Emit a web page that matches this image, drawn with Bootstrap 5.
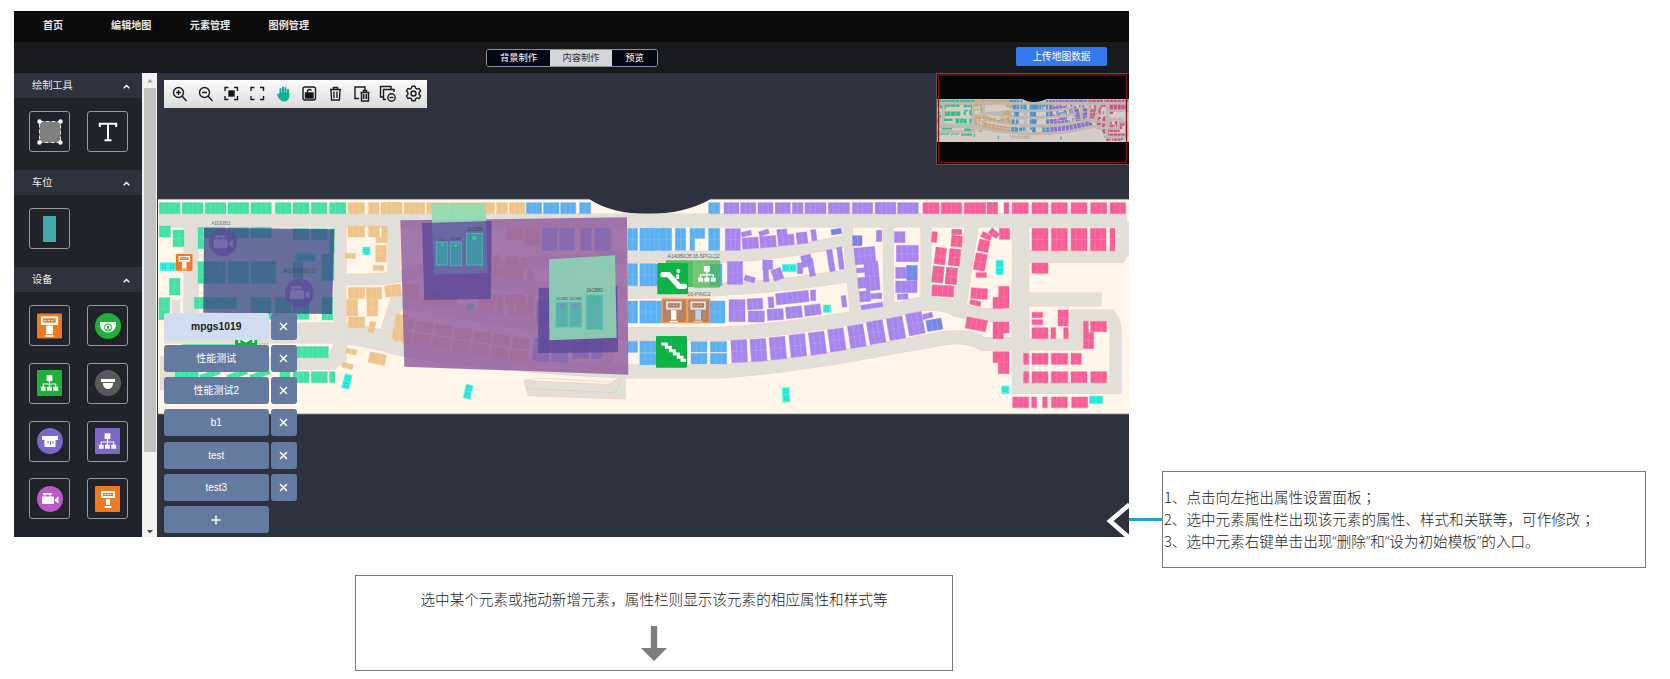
<!DOCTYPE html>
<html lang="zh-CN">
<head>
<meta charset="utf-8">
<title>地图编辑</title>
<link href="https://cdn.jsdelivr.net/npm/bootstrap@5.3.0/dist/css/bootstrap.min.css" rel="stylesheet">
<style>
body{width:1670px;height:679px;overflow:hidden;background:#fff;font-family:"Liberation Sans","Noto Sans CJK SC",sans-serif;color:#333}
.stage{height:526px;margin:11px 0 0 14px}
.editor{width:1115px;height:526px;background:#2d323e;font-size:10px;overflow:hidden}
.topnav{height:31px;background:#0b0b0b;padding-left:29px;gap:38.4px;font-weight:700;color:#e8e8e8;padding-bottom:2px}
.topnav a{color:inherit;text-decoration:none;font-size:10.1px;line-height:14px}
.topnav a:first-child{margin-right:9.500px}
.subbar{height:31px;background:#1a1b1f;position:relative}
.tabs{width:172px;height:18px;margin-left:472px;border:1px solid #8d9096;border-radius:3px;overflow:hidden;font-size:9.3px}
.tabs span{background:#020814;color:#fff;line-height:16px;text-align:center}
.tabs .on{background:#d5d6dc;color:#333}
.upload{width:91px;height:18.5px;background:#347aef;color:#fff;font-size:9.7px;line-height:17px;padding:0;border:0;border-radius:2px;margin:0 22px 2px 0}
.side{width:128px;background:#20232a}
.side h6{height:25px;margin:0;padding:1px 12px 0 18px;background:#2d323e;font-size:10.2px;font-weight:400;color:#e9e9e9}
.tools{display:grid;grid-template-columns:41px 41px;column-gap:17px;row-gap:16.8px;padding:13px 0 0 15px;height:72px}
.tools.dev{height:auto}
.tool{height:41px;border:1px solid #989898;border-radius:3px}
.sbar{width:15px;background:#f1f1f1;padding:0 1px 0 2px}
.thumb{height:364px;background:#c1c1c1}
.arr{height:15px}
.canvas{width:972px}
.mapsvg,.mapsvg svg{display:block}
.toolbar{left:7px;top:7px;width:263px;height:28px;background:linear-gradient(#fafafa,#dcdcdc);padding:0 1px 1px 2px}
.floors{left:7px;top:239.500px;row-gap:5.3px}
.floors .line{gap:2px;height:27px}
.fl{width:104.5px;height:27px;border-radius:3px;background:#647a9f;color:#fff;text-align:center;line-height:28px;font-size:10px}
.fl.sel{background:#d0ddf1;color:#1c1c1c;font-weight:700;font-size:10.3px}
.xx{width:26px;height:27px;border-radius:3px;background:#647a9f}
.mini{right:0;top:0;width:193px;height:92px;background:#050709;border:1px solid #55565a;border-right:0}
.pull{right:0;bottom:0}
.link{width:33px;height:2.5px;background:#22a1d6;margin-top:507px}
.note{border:1px solid #797979;font-family:"Noto Sans CJK SC Light","Noto Sans CJK SC",sans-serif;font-weight:300;font-size:14.6px;line-height:22px;color:#222}
.n1{width:484px;height:97px;margin-top:460px;padding:0 0 2px 1px}
.n2{width:598px;height:96px;margin:38px 0 0 355px;padding-top:12px;font-size:14.6px}
.q{font-family:"Open Sans",sans-serif;font-weight:300}
.sc{font-family:"Noto Sans CJK TC Light","Noto Sans CJK TC",sans-serif}
</style>
</head>
<body>
<svg width="0" height="0" class="position-absolute">
<defs>
<symbol id="kiosk" viewBox="0 0 26 26"><rect width="26" height="26" rx="1" fill="#f0781e"/><path d="M4 3h18v9H4z" fill="#fff"/><rect x="6.500" y="5" width="13" height="4.500" fill="#f0781e"/><path d="M8 7.200h10" stroke="#fff" stroke-dasharray="2 1.500"/><path d="M9.500 12.500h7v9h-7zM8.500 22.500h9v1.800h-9z" fill="#fff"/></symbol>
<symbol id="tree" viewBox="0 0 26 26"><path d="M10 5h6v6h-6zM4 17h5v4H4zM10.500 17h5v4h-5zM17 17h5v4h-5z" fill="#fff"/><path d="M13 10v8M6.500 18v-4h13v4" stroke="#fff" fill="none" stroke-width="1.200"/></symbol>
<symbol id="cam" viewBox="0 0 26 26"><path d="M5 10.500h12v7.500H5zM18 13l3.500-2.500v7L18 15zM6 7h9v1.800H6z" fill="#fff"/><path d="M8 8v3M13 8v3" stroke="#fff"/></symbol>
</defs></svg>

<div class="stage d-flex align-items-start">
 <div class="editor d-flex flex-column flex-shrink-0">
  <nav class="topnav d-flex align-items-center"><a>首页</a><a>编辑地图</a><a>元素管理</a><a>图例管理</a></nav>
  <div class="subbar d-flex align-items-center justify-content-between">
   <div class="tabs d-flex"><span style="width:63px">背景制作</span><span class="on" style="width:62px">内容制作</span><span class="flex-fill">预览</span></div>
   <button class="btn upload">上传地图数据</button>
  </div>
  <div class="d-flex flex-fill" style="min-height:0">
   <aside class="side overflow-hidden">
    <h6 class="d-flex align-items-center justify-content-between">绘制工具<svg width="7" height="5" viewBox="0 0 7 5"><path d="M.7 4.200L3.500 1.400l2.800 2.800" fill="none" stroke="#fff" stroke-width="1.400"/></svg></h6>
    <div class="tools">
     <div class="tool d-flex align-items-center justify-content-center"><svg width="26" height="26"><rect x="2.500" y="2.500" width="21" height="21" fill="#808080" stroke="#ddd" stroke-dasharray="4 2"/><g fill="#fff"><circle cx="2.500" cy="2.500" r="2.200"/><circle cx="23.500" cy="2.500" r="2.200"/><circle cx="2.500" cy="23.500" r="2.200"/><circle cx="23.500" cy="23.500" r="2.200"/></g></svg></div>
     <div class="tool d-flex align-items-center justify-content-center"><svg width="20" height="20"><path d="M1.800 5V1.800h16.400V5M10 2v16M6.500 18.200h7" fill="none" stroke="#fff" stroke-width="2"/></svg></div>
    </div>
    <h6 class="d-flex align-items-center justify-content-between">车位<svg width="7" height="5" viewBox="0 0 7 5"><path d="M.7 4.200L3.500 1.400l2.800 2.800" fill="none" stroke="#fff" stroke-width="1.400"/></svg></h6>
    <div class="tools"><div class="tool d-flex align-items-center justify-content-center"><svg width="13" height="26"><rect width="13" height="26" fill="#40a9a9"/></svg></div></div>
    <h6 class="d-flex align-items-center justify-content-between">设备<svg width="7" height="5" viewBox="0 0 7 5"><path d="M.7 4.200L3.500 1.400l2.800 2.800" fill="none" stroke="#fff" stroke-width="1.400"/></svg></h6>
    <div class="tools dev">
     <div class="tool d-flex align-items-center justify-content-center"><svg width="25" height="26"><use href="#kiosk"/></svg></div>
     <div class="tool d-flex align-items-center justify-content-center"><svg width="26" height="26"><circle cx="13" cy="13" r="13" fill="#1db13a"/><path d="M5 9h16v3c0 4-4 7.500-8 7.500S5 16 5 12z" fill="#fff"/><circle cx="13" cy="14.500" r="3.600" fill="none" stroke="#1db13a"/><circle cx="13" cy="13.700" r="1.200" fill="#1db13a"/><path d="M11 16.800q2-2.500 4 0" stroke="#1db13a" fill="none"/></svg></div>
     <div class="tool d-flex align-items-center justify-content-center"><svg width="25" height="26"><rect width="25" height="26" rx="1" fill="#1db13a"/><use href="#tree"/></svg></div>
     <div class="tool d-flex align-items-center justify-content-center"><svg width="26" height="26"><circle cx="13" cy="13" r="13" fill="#595959"/><path d="M6 9h14v3H6zM8 13h10c0 8-10 8-10 0z" fill="#fff"/></svg></div>
     <div class="tool d-flex align-items-center justify-content-center"><svg width="26" height="26"><circle cx="13" cy="13" r="13" fill="#7b68c8"/><path d="M5 8h16v4H5zM7.500 12h11v7h-11z" fill="#fff"/><path d="M11 13v2.500M13.500 13v4M16 13v2.500" stroke="#7b68c8"/></svg></div>
     <div class="tool d-flex align-items-center justify-content-center"><svg width="25" height="26"><rect width="25" height="26" rx="1" fill="#7b68c8"/><use href="#tree"/></svg></div>
     <div class="tool d-flex align-items-center justify-content-center"><svg width="26" height="26"><circle cx="13" cy="13" r="13" fill="#bb59c6"/><use href="#cam"/></svg></div>
     <div class="tool d-flex align-items-center justify-content-center"><svg width="25" height="26"><rect width="25" height="26" rx="1" fill="#f0781e"/><path d="M6 5h14v7H6zM11 13h4v6h-4zM9.500 20h7v2h-7z" fill="#fff"/><path d="M8 8.500h10" stroke="#f0781e" stroke-width="3"/><path d="M9.500 8.500h7" stroke="#fff" stroke-dasharray="1.500 1"/></svg></div>
    </div>
   </aside>
   <div class="sbar d-flex flex-column"><svg class="arr" width="12"><path d="M3 9.500l3-3.500 3 3.500z" fill="#a3a3a3"/></svg><div class="thumb"></div><svg class="arr mt-auto" width="12"><path d="M3 8l3 3.500 3-3.500z" fill="#505050"/></svg></div>
   <div class="canvas position-relative">
    <svg class="mapsvg" width="972" height="464" viewBox="157 73 972 464">
     <g id="plan">
      <path d="M158 199H589Q612 214 648 214T711 199H1129V414H158z" fill="#fff6e9"/>
      <g id="roads"></g>
      <g id="blocks"></g>
     </g>
     <path d="M158 199.300H589M711 199.300H1129M158 414H1129" stroke="#8e8984" fill="none" stroke-width=".8"/>
     <!-- coloured zones and placed devices, west -->
     <g transform="translate(150 190) scale(.33333)">
      <path d="M162 113L553 118 546 372 160 368z" fill="#404c87" fill-opacity=".8"/>
      <g fill="#5c4b98" fill-opacity=".75"><circle cx="219" cy="157" r="42"/><circle cx="448" cy="309" r="43"/></g>
      <g opacity=".16"><use href="#cam" x="174" y="112" width="90" height="90"/><use href="#cam" x="402" y="264" width="92" height="92"/></g>
      <use href="#kiosk" x="78" y="191" width="50" height="52"/>
      <path d="M255 447h67v25h-67z" fill="#0eb345"/><path d="M268 447v12M310 447v12M275 447l13 8 12-8" stroke="#fff" stroke-width="6" fill="none"/>
      <g font-size="16" fill="#555" opacity=".7"><text x="184" y="106" textLength="58">A1010801</text><text x="400" y="249" font-size="20" textLength="96" fill="#3c3d70">A1010802</text><text x="325" y="470" font-size="14">A101</text></g>
     </g>
     <!-- centre -->
     <g transform="translate(390 190) scale(.33333)">
      <path d="M31 91L711 82 715 554 43 530z" fill="#905a9e" fill-opacity=".82"/>
      <path d="M96 99L305 93 303 327 103 330z" fill="#5a4699" fill-opacity=".78"/>
      <path d="M123 39H288V94L126 98z" fill="#90dbaf" fill-opacity=".9"/>
      <path d="M126 98L288 94 293 248 132 254z" fill="#6a8fb0" fill-opacity=".4"/>
      <path d="M446 294L682 288 684 487 444 489z" fill="#5a4699" fill-opacity=".78"/>
      <path d="M477 208L675 196 680 443 478 451z" fill="#8dcdb4" fill-opacity=".95"/>
      <g fill="#4491aa" stroke="#4cb4b9" stroke-width="3"><rect x="139" y="156" width="34" height="69"/><rect x="181" y="156" width="33" height="71"/><rect x="230" y="130" width="47" height="95"/></g>
      <g fill="#5aafa9" stroke="#4fc3b4" stroke-width="3"><rect x="498" y="337" width="36" height="74"/><rect x="539" y="337" width="35" height="74"/><rect x="589" y="315" width="48" height="103"/></g>
      <g fill="#40c080"><circle cx="157" cy="163" r="5"/><circle cx="197" cy="166" r="5"/><circle cx="253" cy="144" r="7"/><circle cx="613" cy="329" r="7"/></g><g fill="#8a83cb"><circle cx="516" cy="346" r="6"/><circle cx="557" cy="346" r="6"/></g>
      <g fill="#444" font-size="13" opacity=".75"><text x="145" y="153" font-size="10">16-C</text><text x="180" y="151" textLength="36">16-CB85</text><text x="231" y="123" font-size="16" textLength="48">16-CB86</text><text x="498" y="330" textLength="37">16-CB82</text><text x="539" y="330" textLength="37">16-CB84</text><text x="588" y="307" font-size="16" textLength="50">16-CB83</text></g>
     </g>
     <g transform="translate(630 190) scale(.33333)">
      <rect x="108" y="211" width="82" height="80" fill="#55bd6a"/><rect x="190" y="211" width="81" height="82" rx="4" fill="#45b94e" fill-opacity=".75"/><use href="#tree" x="192" y="213" width="77" height="77"/>
      <rect x="82" y="219" width="92" height="94" rx="3" fill="#0eb345"/><path d="M99 254h17l31 35h16" fill="none" stroke="#fff" stroke-width="16" stroke-linecap="round" stroke-linejoin="round"/><path d="M143 253v14" stroke="#fff" stroke-width="9"/><circle cx="145" cy="243" r="6" fill="#fff"/>
      <g fill="#b78362" stroke="#f59b55" stroke-width="4"><rect x="97" y="327" width="73" height="71"/><rect x="173" y="327" width="66" height="71"/></g>
      <g fill="#ddd"><path d="M108 334h47v25h-47zM181 334h47v25h-47z"/><path d="M123 361h16v28h-16zM119 392h25v5h-25z" fill="#fff"/><path d="M196 361h17v28h-17zM192 392h25v5h-25z" fill="#b9d5ee"/></g><path d="M114 346h35M187 346h35" stroke="#a67b60" stroke-width="13"/><path d="M118 346h28M190 346h28" stroke="#eee" stroke-width="2" stroke-dasharray="6 4"/>
      <rect x="78" y="438" width="93" height="95" rx="3" fill="#0eb345"/><path d="M94 462h15v10h12v10h12v10h12v10h11v9h12" fill="none" stroke="#fff" stroke-width="9"/>
      <g fill="#555" font-size="17" opacity=".8"><text x="112" y="203" textLength="158">A14089CB 16-SPGLQ2</text><text x="172" y="317" textLength="70">16-PING2</text></g>
     </g>
    </svg>
    <div id="bar" class="toolbar position-absolute d-flex align-items-center"></div>
    <div id="floors" class="floors position-absolute d-flex flex-column"></div>
    <div class="mini position-absolute"><svg class="mapsvg" width="192" height="90"><svg x="0" y="25" width="192" height="43" viewBox="158 199 971 215" preserveAspectRatio="none"><use href="#plan" opacity=".83"/></svg><rect x="1.500" y="1" width="188" height="87.500" fill="none" stroke="#8a0d14" stroke-width="1.300"/></svg></div>
    <svg class="pull position-absolute" width="23" height="36"><path d="M23.500 3.500L4 20l19.500 17" fill="none" stroke="#fff" stroke-width="4.600"/></svg>
   </div>
  </div>
 </div>
 <div class="link flex-shrink-0"></div>
 <div class="note n1 flex-shrink-0 d-flex flex-column justify-content-center text-nowrap"><div>1、点击向左拖出属性设置面板<span class="sc" lang="zh-TW">；</span></div><div>2、选中元素属性栏出现该元素的属性、样式和关联等，可作修改<span class="sc" lang="zh-TW">；</span></div><div>3、选中元素右键单击出现<span class="q">“</span>删除<span class="q">”</span>和<span class="q">“</span>设为初始模板<span class="q">”</span>的入口。</div></div>
</div>
<div class="note n2 text-center d-flex flex-column align-items-center"><div>选中某个元素或拖动新增元素，属性栏则显示该元素的相应属性和样式等</div><svg class="mt-3" width="26" height="35"><path d="M9.800 0h6.400v22H26L13 35 0 22h9.800z" fill="#7d7d7d"/></svg></div>

<script src="https://cdn.jsdelivr.net/npm/bootstrap@5.3.0/dist/js/bootstrap.bundle.min.js"></script>
<script>
// toolbar
const I=[
'<circle cx="7.500" cy="7.500" r="5"/><path d="M11 11l4.500 5M5 7.500h5M7.500 5v5"/>',
'<circle cx="7.500" cy="7.500" r="5"/><path d="M11 11l4.500 5M5 7.500h5"/>',
'<path d="M2 6V2.500h3.500M11 2.500h3.500V6M14.500 11v3.500H11M5.500 14.500H2V11"/><rect x="6" y="6" width="5" height="5" fill="#111"/>',
'<path d="M2 6V2.500h3.500M11 2.500h3.500V6M14.500 11v3.500H11M5.500 14.500H2V11"/>',
'<path d="M5.500 10V4M8 9V2.500M10.500 9V3M13 10V5" stroke="#0bb39c" stroke-width="2" stroke-linecap="round"/><path d="M4.600 8h9.400v4q-1 4-4 4H8q-2 0-4-3L2.200 9.500l1.500-.5 1.500 1.800z" fill="#0bb39c" stroke="#0bb39c" stroke-width=".8"/>',
'<rect x="2" y="2" width="12.500" height="13" rx="2"/><rect x="4.500" y="8" width="7.500" height="5" fill="#111"/><path d="M6.500 8V5.500q2-2 4 0"/>',
'<path d="M3 4.500h11M6.500 4V2.500h4V4M4 5l.6 10h7.800L13 5M7 6.500v6.500M10 6.500v6.500"/>',
'<path d="M6 13.500H2V2h10v3"/><path d="M7.500 7.500h9M10.500 7V5.500h3V7M8.500 8v8h7V8M10.700 9v5M13.300 9v5" stroke-width="1.500"/>',
'<path d="M4 12H1.500V1.500H12V4"/><path d="M7 14.500H4.500V4.500H15V7"/><circle cx="12.500" cy="12.500" r="3.700"/><path d="M10.500 12.500h4"/>',
'<path d="M7 1.200h3l.5 2 1.600.9 2-.6 1.500 2.600-1.500 1.500v1.800l1.500 1.500-1.500 2.600-2-.6-1.600.9-.5 2H7l-.5-2-1.600-.9-2 .6-1.500-2.600 1.500-1.500V7.600L1.400 6.100l1.500-2.600 2 .6 1.600-.9z" stroke-linejoin="round"/><circle cx="8.500" cy="8.500" r="2.500"/>'];
document.getElementById('bar').innerHTML=I.map(p=>`<div class="flex-fill d-flex justify-content-center"><svg width="17" height="17" fill="none" stroke="#1c1c1c" stroke-width="1.400">${p}</svg></div>`).join('');
// floor list
const X='<div class="xx d-flex align-items-center justify-content-center"><svg width="9" height="9"><path d="M1 1l7 7M8 1L1 8" stroke="#fff" stroke-width="1.500"/></svg></div>';
document.getElementById('floors').innerHTML=['mpgs1019','性能测试','性能测试2','b1','test','test3'].map((t,i)=>`<div class="line d-flex"><div class="fl ${i?'':'sel'}">${t}</div>${X}</div>`).join('')+'<div class="line d-flex"><div class="fl d-flex align-items-center justify-content-center"><svg width="10" height="10"><path d="M5 .5v9M.5 5h9" stroke="#fff" stroke-width="1.400"/></svg></div></div>';
// roads: [path, width]
const R=[['M159 220.500H1127',13],['M191 222V340',14],['M340 222V366',12],['M394 220V276',12],['M338 279.500H370Q400 279 420 270L640 256.700H727Q790 253 847 240.700',11],
['M164 333H335Q352 333 380 340',20],['M160 363H332L346 333',12],['M167 358V390',13],['M176 300V335',7],['M384 341L397 301 430 306Q520 325 630 334H720Q797 329 880 313L920 304Q945 303 955 309 975 315 985 315H1020',13],
['M346 331Q380 344 400 349 520 368 630 371.500H720Q797 366 890 348L945 338Q970 335 983 344H1020',13],['M420 272Q520 290 630 292.500 727 291 797 283L848 276',12],['M847 225L856 320',10],['M888 224L889 312',10],['M926 224L926 305',10],['M972 224L959 310',13],['M1020.500 222V388',16.500],
['M1013 256.500H1120L1123 252V222',11.500],['M1022 299.500H1102',13],['M1022 344.500H1076.500V315.500H1110Q1115 320 1115.500 330V388H1012',11],['M605 226V368',15]];
let h='';
for(const [d,w] of R)h+=`<path d="${d}" stroke="#f6cbbb" stroke-width="${w+1}"/>`;
for(const [d,w] of R)h+=`<path d="${d}" stroke="#e2dfd9" stroke-width="${w}"/>`;
h+='<path d="M524 380.700L609 384.300 620 377H625.300V399L528.300 395.700z" fill="#e2dfd9" stroke="#f6cbbb" stroke-width=".7"/><path d="M524.500 380.500L610 384.500V382L540 378z" fill="#fff6e9" stroke="#f6cbbb" stroke-width=".7"/><path d="M526 388.500l85 4q8 0 8-11" stroke="#f0a99a" stroke-width=".6" stroke-dasharray="2 1"/>';
const rd=document.getElementById('roads');rd.setAttribute('fill','none');rd.innerHTML=h;
// parking blocks: section origin, colour, then x y w h [angle] in thirds of a pixel
const G='#42e2a5',T='#efc48c',B='#5cb0f2',V='#a685ee',P='#f95f96',C='#33f5e2';
const row=(y,hh,s)=>s.map(a=>[a[0],y,a[1],hh]);
const D=[
[150,G,[...row(38,33,[[28,62],[97,62],[166,62],[234,62],[303,61],[376,47],[429,48],[484,47],[539,49]]),[28,108,33,33],[69,120,33,50],[144,112,17,64],[164,112,62,32],[234,112,62,32],[303,112,61,32],[429,116,48,33],[484,116,48,33],[539,116,14,74],[516,192,36,80],[144,215,82,65],[234,215,62,65],[303,215,74,65],[58,265,32,50],[27,323,32,66],[133,322,127,34],[303,322,60,66],[376,322,47,66],[429,216,30,50],[429,322,48,66],[516,322,32,68],[440,470,95,33],[97,463,155,20],[75,545,70,18],[390,545,30,33],[429,545,48,33],[484,545,48,33],[539,545,16,33],[150,545,60,17,-20],[232,545,60,17,-20],[300,545,60,17,-20]]],
[150,T,[...row(38,33,[[594,49],[656,31],[694,61]]),[594,108,50,33],[656,108,32,33],[695,108,17,33],[678,142,34,16],[677,166,32,50],[670,226,31,15],[586,190,30,15],[595,292,49,34],[649,292,46,35],[705,286,48,33,-7],[590,328,33,50],[651,328,32,50],[595,381,49,32],[657,395,17,33,15],[742,375,30,33,10],[732,414,32,34,10],[588,477,32,15,12],[657,490,50,32,12],[577,521,32,14,15]]],
[150,C,[[30,218,48,24],[438,190,57,23],[638,171,22,23],[580,553,22,43,14]]],
[390,T,[...row(38,33,[[-26,62],[42,62],[110,62],[178,66],[247,66],[320,32],[358,47]]),[-10,285,42,32,-6],[15,375,28,33,8],[8,414,32,34,8]]],
[390,T,[[350,114,48,34],[404,114,46,52],[313,194,16,32],[348,200,34,31],[394,202,15,31],[306,232,95,34,4],[413,240,16,32],[40,282,46,34],[54,300,32,32],[100,305,48,42,7],[152,315,48,36,7],[266,310,50,58,7],[323,314,16,60],[347,312,58,32],[356,344,16,32],[378,344,48,34],[414,314,16,65],...[0,1,2,3,4,5,6].flatMap(i=>[[20+i*58,385+i*10,50,32,8-i*.6],[12+i*58,422+i*10,52,33,8-i*.6]])]],
[390,B,[...row(38,33,[[409,46],[461,46],[512,45],[569,33]]),...row(115,66,[[456,46],[509,44],[572,32],[614,46],[713,30],[750,45]]),...row(221,66,[[477,20],[500,48],[713,30],[750,45]]),...row(333,66,[[440,40],[500,40],[713,30],[750,45]]),[430,445,48,68,5],[486,450,48,66,3],[548,455,48,50],[604,455,32,50],[713,454,30,33],[750,454,45,33],[750,491,45,33]]],
[390,C,[[230,340,22,22,8],[224,584,21,42,13]]],
[630,B,[[236,38,33,33],...row(115,66,[[30,86-0],[95,30],[136,31],[236,33]]),[180,115,44,30],[180,145,14,36],[30,222,56,65],[240,222,36,65],[30,333,66,66],[240,333,45,66],[30,455,48,32],[30,491,48,32],...row(455,31,[[183,48],[241,49]]),...row(490,32,[[183,48],[241,49]])]],
[630,V,[...row(38,33,[[282,45],[332,45],[384,45],[436,45],[487,32],[525,63],[595,64],[667,61],[735,62]]),[286,116,45,65],[334,124,30,14,-14],[337,143,48,33,-4],[387,121,30,14,-18],[390,138,48,34,-4],[441,118,30,20,-5],[444,134,48,32,-5],[500,127,32,34,-7],[544,119,15,33,-7],[292,215,46,68],[343,259,32,16,16],[398,210,30,28],[400,236,16,39,-3],[427,236,30,34,-20],[502,219,16,32],[515,195,30,35,-12],[535,205,17,54,-10],[594,179,17,65,-9],[624,172,15,66,-7],[297,329,48,66],[352,326,46,32,-3],[355,363,48,33],[415,321,16,32,-5],[412,357,48,33,-4],[438,306,98,34,-6],[542,300,15,32],[468,350,48,34,-6],[524,344,48,32,-7],[635,317,14,34,-7],...[[304,450],[362,447],[420,441],[480,433],[539,426],[597,416],[657,405],[715,393]].map((a,i)=>[a[0],a[1],47,67,-3-i]),[739,121,15,33],[674,172,62,50,-5],[705,215,42,86,-5],[680,234,25,14,-5],[684,262,30,32,-5],[689,303,32,32,-4],[722,310,32,16,-5],[693,341,65,14,-9]]],
[630,'#7b7fec',[[604,117,30,16,-8],[668,137,28,30]]],
[630,C,[[457,223,42,22],[580,345,22,22],[457,593,22,43,-3]]],
[880,V,[[-10,38,57,33],[53,38,62,33],[43,125,32,33],[49,166,66,49],[47,232,33,33],[47,273,64,35],[52,312,32,16,-3],[-5,122,10,32],[-5,310,10,15],[-35,395,47,64,-10],[24,382,48,66,-10],[82,368,48,66,-11],[128,370,30,15,-15]]],
[880,'#7788ec',[[80,226,32,45],[140,388,46,33,-10]]],
[880,P,[...row(38,33,[[129,48],[184,61],[253,64],[322,30],[372,15],[397,48],[456,48],[514,48],[573,48],[632,48],[690,47]]),[155,125,16,32,5],[216,119,28,14],[214,137,32,33,6],[165,173,32,50,7],[207,177,33,50,6],[158,230,32,47,6],[198,234,32,48,5],[156,286,65,33,3],[304,130,30,17,25],[328,122,28,16,40],[358,115,31,33],[295,150,32,35,12],[284,191,34,50,10],[288,248,31,14],[273,294,32,32,4],[306,296,16,32],[270,332,32,14,14],[356,289,31,65],[339,322,30,33],[258,386,62,34,11],[339,396,48,33],[339,428,31,18],[339,485,48,33],[355,518,32,33],...row(115,67,[[456,48],[514,48],[573,48],[631,47],[690,15]]),[456,219,48,31],[456,367,32,16],[456,389,32,15],[456,413,48,33],[513,413,14,33],[534,360,31,48],[551,413,14,33],[610,394,15,33],[632,394,48,31],[610,427,31,49],...row(490,33,[[431,15],[456,48],[514,49],[573,31]]),...row(545,33,[[431,15],[456,48],[514,49],[573,48],[632,48]]),...row(621,32,[[398,48],[455,15],[488,14],[514,48],[575,48]])]],
[880,C,[[348,211,22,43],[365,588,22,23],[628,618,40,23]]]];
let s='';
for(const [ox,c,bs] of D){s+=`<g transform="translate(${ox} 190) scale(.33333)" fill="${c}">`;
 for(const [x,y,w,hh,a] of bs){s+=`<g${a?` transform="rotate(${a} ${x+w/2} ${y+hh/2})"`:''}><rect x="${x}" y="${y}" width="${w}" height="${hh}" stroke="${c}" stroke-opacity=".4" stroke-width="3"/>`;
  if(c===C){ // lift shafts carry a small frame per car
   const nx=w>30?2:1,ny=hh>30?2:1;
   for(let i=0;i<nx;i++)for(let j=0;j<ny;j++)s+=`<rect x="${x+w/nx*(i+.5)-5}" y="${y+hh/ny*(j+.5)-5}" width="10" height="10" fill="none" stroke="#1d9aa5" stroke-opacity=".55" stroke-width="2"/>`;
   s+='</g>';continue;}
  const n=Math.round(w/15.500);let d='';
  for(let i=1;i<n;i++)d+=`M${x+w*i/n} ${y}v${hh}`;
  if(hh>45)d+=`M${x} ${y+hh/2}h${w}`;
  s+=`<path d="${d||'M0 0'}" stroke="#fff" stroke-opacity=".2" stroke-width="2"/></g>`;}
 s+='</g>';}
s+='<g transform="translate(880 190) scale(.33333)" fill="none" stroke="#8a8aa5" stroke-opacity=".6" stroke-width="3"><rect x="322" y="38" width="30" height="33"/><rect x="158" y="230" width="32" height="47" transform="rotate(6 174 253)"/><rect x="198" y="234" width="32" height="48" transform="rotate(5 214 258)"/><rect x="216" y="119" width="28" height="14"/><rect x="328" y="122" width="28" height="16" transform="rotate(40 342 130)"/></g>';
document.getElementById('blocks').innerHTML=s;
</script>
</body>
</html>
